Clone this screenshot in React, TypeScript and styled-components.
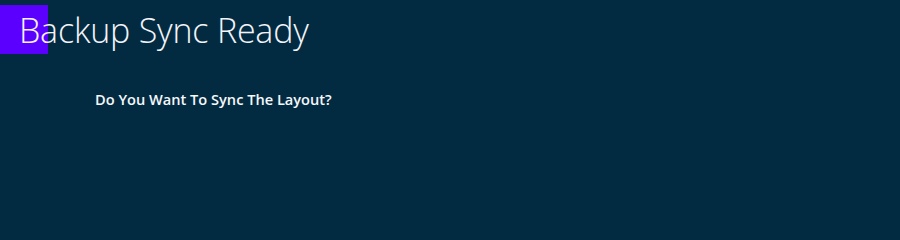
import React from "react";
import styled, { createGlobalStyle } from "styled-components";

const GlobalStyle = createGlobalStyle`
  html, body {
    margin: 0;
    padding: 0;
    background: #022b42;
  }
`;

const Screen = styled.div`
  position: relative;
  width: 900px;
  height: 216px;
  background: #022b42;
  font-family: "Open Sans", "Liberation Sans", sans-serif;
  color: #ffffff;
  overflow: hidden;
`;

const Accent = styled.div`
  position: absolute;
  left: 0;
  top: 5px;
  width: 48px;
  height: 49px;
  background: #5b00ff;
`;

const Header = styled.header`
  position: relative;
  padding: 6px 0 0 19px;
`;

const Title = styled.h1`
  margin: 0;
  font-size: 34px;
  font-weight: 300;
  line-height: 48px;
  letter-spacing: -0.2px;
  color: #f4f4f8;
`;

const Body = styled.section`
  padding: 35px 0 0 95px;
`;

const Question = styled.p`
  margin: 0;
  font-size: 14.6px;
  font-weight: 600;
  line-height: 20px;
  color: #f6f8fa;
`;

const App = () => {
  return (
    <>
      <GlobalStyle />
      <Screen>
        <Accent />
        <Header>
          <Title>Backup Sync Ready</Title>
        </Header>
        <Body>
          <Question>Do You Want To Sync The Layout?</Question>
        </Body>
      </Screen>
    </>
  );
};

export default App;
